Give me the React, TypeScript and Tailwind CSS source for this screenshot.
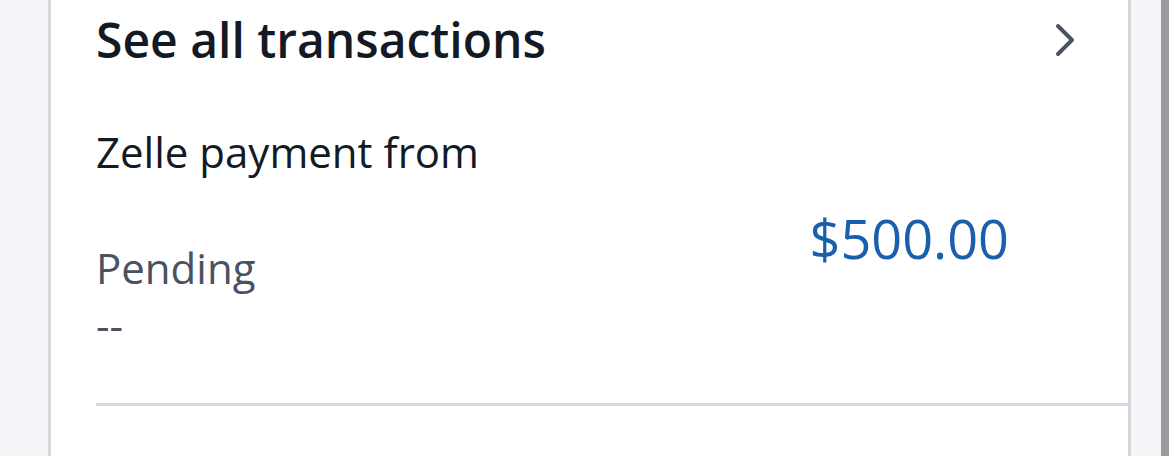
import { ChevronRight } from 'lucide-react';

export default function App() {
  return (
    <div
      className="flex h-[456px] w-full overflow-hidden bg-[#f4f5f9]"
      style={{ fontFamily: '"Open Sans", "Noto Sans", sans-serif' }}
    >
      <div className="w-[48px] shrink-0" />
      <div className="flex w-[1083px] shrink-0 flex-col border-x-[3px] border-[#d5d6da] bg-white">
        <div className="flex h-[80px] shrink-0 items-center justify-between pl-[45px] pr-[35px]">
          <h1 className="text-[48px] font-semibold leading-none text-[#141a24]">
            See all transactions
          </h1>
          <ChevronRight className="h-[56px] w-[56px] text-[#4b5360]" strokeWidth={1.7} />
        </div>
        <div className="ml-[45px] flex shrink-0 items-start justify-between border-b-[3px] border-[#d6d7da] pb-[50px] pr-[119px]">
          <div className="flex flex-col">
            <span className="mt-[44px] text-[42px] leading-[56px] text-[#141a24]">Zelle payment from</span>
            <span className="mt-[60px] text-[42px] leading-[56px] text-[#4a5261]">Pending</span>
            <span className="mt-[1px] text-[42px] leading-[56px] text-[#4a5261]">--</span>
          </div>
          <span className="mt-[131px] text-[54px] leading-none text-[#1a5fae]">$500.00</span>
        </div>
      </div>
      <div className="w-[30px] shrink-0" />
      <div className="w-[8px] shrink-0 bg-[#9b9b9b]" />
    </div>
  );
}
